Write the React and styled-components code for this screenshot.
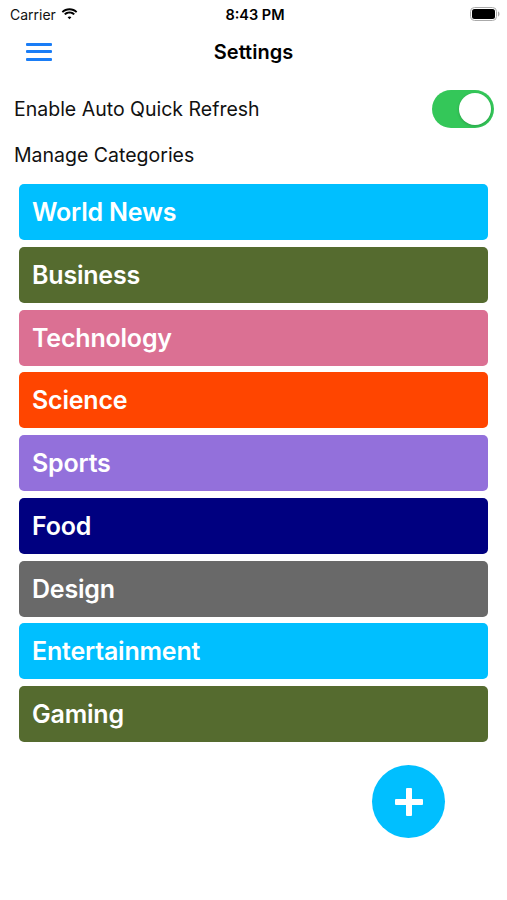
import React from "react";
import styled, { createGlobalStyle } from "styled-components";

const Global = createGlobalStyle`
  html, body { margin: 0; padding: 0; background: #fff; }
  body { font-family: Inter, "Noto Sans", sans-serif; color: #000; }
`;

const Screen = styled.div`
  width: 507px;
  height: 900px;
  display: flex;
  flex-direction: column;
  background: #fff;
`;

const StatusBar = styled.div`
  height: 28px;
  display: grid;
  grid-template-columns: 1fr auto 1fr;
  align-items: center;
  padding: 0 7px 0 10px;
  font-size: 14px;
`;

const Carrier = styled.div`
  display: flex;
  align-items: center;
  gap: 5px;
  font-weight: 400;
  color: #111;
`;

const Time = styled.div`
  font-weight: 600;
  font-size: 14.5px;
`;

const Battery = styled.div`
  justify-self: end;
  display: flex;
  align-items: center;
`;

const NavBar = styled.div`
  height: 48px;
  display: grid;
  grid-template-columns: 1fr auto 1fr;
  align-items: center;
  padding: 0 26px;
`;

const Title = styled.div`
  font-size: 20px;
  font-weight: 600;
`;

const MenuButton = styled.div`
  width: 26px;
  display: flex;
  flex-direction: column;
  gap: 4.5px;
  margin-top: -1px;
`;

const MenuLine = styled.span`
  display: block;
  height: 3px;
  background: #1a7df6;
  border-radius: 1px;
`;

const SettingRow = styled.div`
  display: flex;
  align-items: center;
  justify-content: space-between;
  padding: 0 13px 0 14px;
  height: 46px;
  margin-top: 10px;
`;

const Label = styled.div`
  font-size: 19.5px;
  font-weight: 400;
  color: #111;
`;

const Toggle = styled.div`
  width: 62px;
  height: 38px;
  border-radius: 19px;
  background: #34c759;
  display: flex;
  align-items: center;
  justify-content: flex-end;
  padding: 3px;
  box-sizing: border-box;
`;

const Knob = styled.div`
  width: 32px;
  height: 32px;
  border-radius: 50%;
  background: #fff;
  box-shadow: 0 1px 3px rgba(0, 0, 0, 0.2);
`;

const SectionLabel = styled(Label)`
  padding: 0 14px;
  margin-top: 9px;
  height: 28px;
  display: flex;
  align-items: center;
`;

const List = styled.div`
  display: flex;
  flex-direction: column;
  gap: 6.75px;
  padding: 0 19px;
  margin-top: 15px;
`;

const Category = styled.div`
  height: 56px;
  border-radius: 5px;
  background: ${(p) => p.$bg};
  display: flex;
  align-items: center;
  padding: 0 13px;
  color: #fff;
  font-size: 25px;
  font-weight: 600;
  letter-spacing: -0.2px;
`;

const FabRow = styled.div`
  display: flex;
  justify-content: flex-end;
  padding: 0 62px 0 0;
  margin-top: 23px;
`;

const Fab = styled.div`
  width: 73px;
  height: 73px;
  border-radius: 50%;
  background: #00bfff;
  display: flex;
  align-items: center;
  justify-content: center;
`;

const categories = [
  ["World News", "#00bfff"],
  ["Business", "#556b2f"],
  ["Technology", "#db7093"],
  ["Science", "#ff4500"],
  ["Sports", "#9370db"],
  ["Food", "#000080"],
  ["Design", "#696969"],
  ["Entertainment", "#00bfff"],
  ["Gaming", "#556b2f"],
];

export default function App() {
  return (
    <Screen>
      <Global />
      <StatusBar>
        <Carrier>
          Carrier
          <svg width="17" height="12" viewBox="0 0 17 12">
            <path d="M8.5 2.2c2.5 0 4.8 1 6.5 2.6l1.3-1.3C14.3 1.5 11.5.3 8.5.3S2.7 1.5.7 3.5L2 4.8c1.7-1.6 4-2.6 6.5-2.6z" fill="#000" />
            <path d="M8.5 5.4c1.6 0 3 .6 4.1 1.6l1.3-1.3C12.5 4.4 10.6 3.6 8.5 3.6S4.5 4.4 3.1 5.7L4.4 7c1.1-1 2.5-1.6 4.1-1.6z" fill="#000" />
            <path d="M8.5 8.5c.8 0 1.4.3 1.9.7L8.5 11.2 6.6 9.2c.5-.4 1.1-.7 1.9-.7z" fill="#000" />
          </svg>
        </Carrier>
        <Time>8:43 PM</Time>
        <Battery>
          <svg width="30" height="14" viewBox="0 0 30 14">
            <rect x="0.5" y="0.5" width="26" height="13" rx="4" fill="none" stroke="#aaa" />
            <rect x="2" y="2" width="23" height="10" rx="2.5" fill="#000" />
            <path d="M28 4.5v5c.9-.3 1.5-1.2 1.5-2.5S28.9 4.8 28 4.5z" fill="#aaa" />
          </svg>
        </Battery>
      </StatusBar>
      <NavBar>
        <MenuButton>
          <MenuLine />
          <MenuLine />
          <MenuLine />
        </MenuButton>
        <Title>Settings</Title>
        <div />
      </NavBar>
      <SettingRow>
        <Label>Enable Auto Quick Refresh</Label>
        <Toggle>
          <Knob />
        </Toggle>
      </SettingRow>
      <SectionLabel>Manage Categories</SectionLabel>
      <List>
        {categories.map(([name, color]) => (
          <Category key={name} $bg={color}>
            {name}
          </Category>
        ))}
      </List>
      <FabRow>
        <Fab>
          <svg width="30" height="30" viewBox="0 0 30 30">
            <rect x="12" y="1" width="6" height="28" rx="1" fill="#fff" />
            <rect x="1" y="12" width="28" height="6" rx="1" fill="#fff" />
          </svg>
        </Fab>
      </FabRow>
    </Screen>
  );
}
